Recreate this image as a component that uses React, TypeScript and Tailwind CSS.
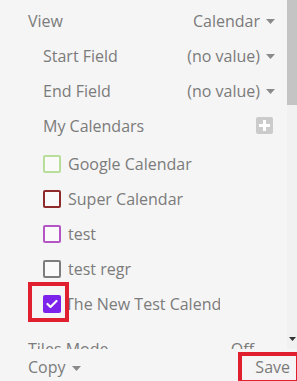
import React from 'react';

const Caret = () => (
  <svg width="9" height="5" viewBox="0 0 9 5" className="ml-[6px] mt-[2px]">
    <path d="M0 0h9L4.5 5z" fill="#8a8a8a" />
  </svg>
);

const calendars = [
  { name: 'Google Calendar', color: '#b9de9c' },
  { name: 'Super Calendar', color: '#8e2a2a' },
  { name: 'test', color: '#b455c4' },
  { name: 'test regr', color: '#7d7d7d' },
];

const App: React.FC = () => {
  return (
    <div className="w-[297px] h-[381px] bg-[#f5f5f5] relative overflow-hidden flex flex-col font-['Open_Sans',sans-serif] text-[16px] text-[#7b7b7b]">
      <div className="flex flex-1 min-h-0">
        <div className="flex-1 min-w-0 overflow-hidden pl-[28px] pr-[12px] pt-[3px]">
          <div className="h-[35px] flex items-center justify-between">
            <span>View</span>
            <span className="flex items-center">Calendar<Caret /></span>
          </div>
          <div className="pl-[15px]">
            <div className="h-[35px] flex items-center justify-between">
              <span>Start Field</span>
              <span className="flex items-center">(no value)<Caret /></span>
            </div>
            <div className="h-[35px] flex items-center justify-between">
              <span>End Field</span>
              <span className="flex items-center">(no value)<Caret /></span>
            </div>
            <div className="h-[35px] flex items-center justify-between">
              <span>My Calendars</span>
              <span className="w-[17px] h-[17px] bg-[#cbcbcb] rounded-[2px] flex items-center justify-center mr-[2px]">
                <svg width="11" height="11" viewBox="0 0 11 11">
                  <path d="M4 0h3v4h4v3H7v4H4V7H0V4h4z" fill="#fff" />
                </svg>
              </span>
            </div>
            <div className="mt-[3px]">
              {calendars.map((c) => (
                <div key={c.name} className="h-[35px] flex items-center">
                  <span
                    className="w-[18px] h-[18px] rounded-[2px] border-2 bg-[#fafafa] shrink-0"
                    style={{ borderColor: c.color }}
                  />
                  <span className="ml-[7px] whitespace-nowrap">{c.name}</span>
                </div>
              ))}
              <div className="h-[35px] flex items-center">
                <span className="w-[18px] h-[18px] rounded-[2px] bg-[#7c22ea] shrink-0 flex items-center justify-center">
                  <svg width="12" height="10" viewBox="0 0 12 10">
                    <path d="M1.5 5l3 3 6-6" stroke="#fff" strokeWidth="2.2" fill="none" strokeLinecap="round" strokeLinejoin="round" />
                  </svg>
                </span>
                <span className="ml-[4px] whitespace-nowrap overflow-hidden w-[155px] shrink-0">The New Test Calendar</span>
              </div>
            </div>
          </div>
          <div className="h-[35px] mt-[10px] flex items-center justify-between">
            <span>Tiles Mode</span>
            <span className="flex items-center mr-[3px]">Off<span className="ml-[10px]">–</span></span>
          </div>
        </div>
        <div className="w-[10px] bg-[#f1f1f1] flex flex-col">
          <div className="h-[105px] bg-[#c4c4c4]" />
          <div className="flex-1 flex items-end justify-center pb-[8px]">
            <svg width="7" height="4" viewBox="0 0 7 4">
              <path d="M0 0h7L3.5 4z" fill="#333" />
            </svg>
          </div>
        </div>
      </div>
      <div className="h-[32px] shrink-0 bg-[#f5f5f5] flex items-center justify-between pl-[28px] pr-[7px] pt-[4px]">
        <span className="flex items-center">Copy<Caret /></span>
        <span>Save</span>
      </div>
      <div className="absolute left-[28px] top-[282px] w-[41px] h-[40px] border-4 border-[#e0202e]" />
      <div className="absolute left-[238px] top-[352px] w-[62px] h-[32px] border-4 border-[#e0202e]" />
    </div>
  );
};

export default App;
